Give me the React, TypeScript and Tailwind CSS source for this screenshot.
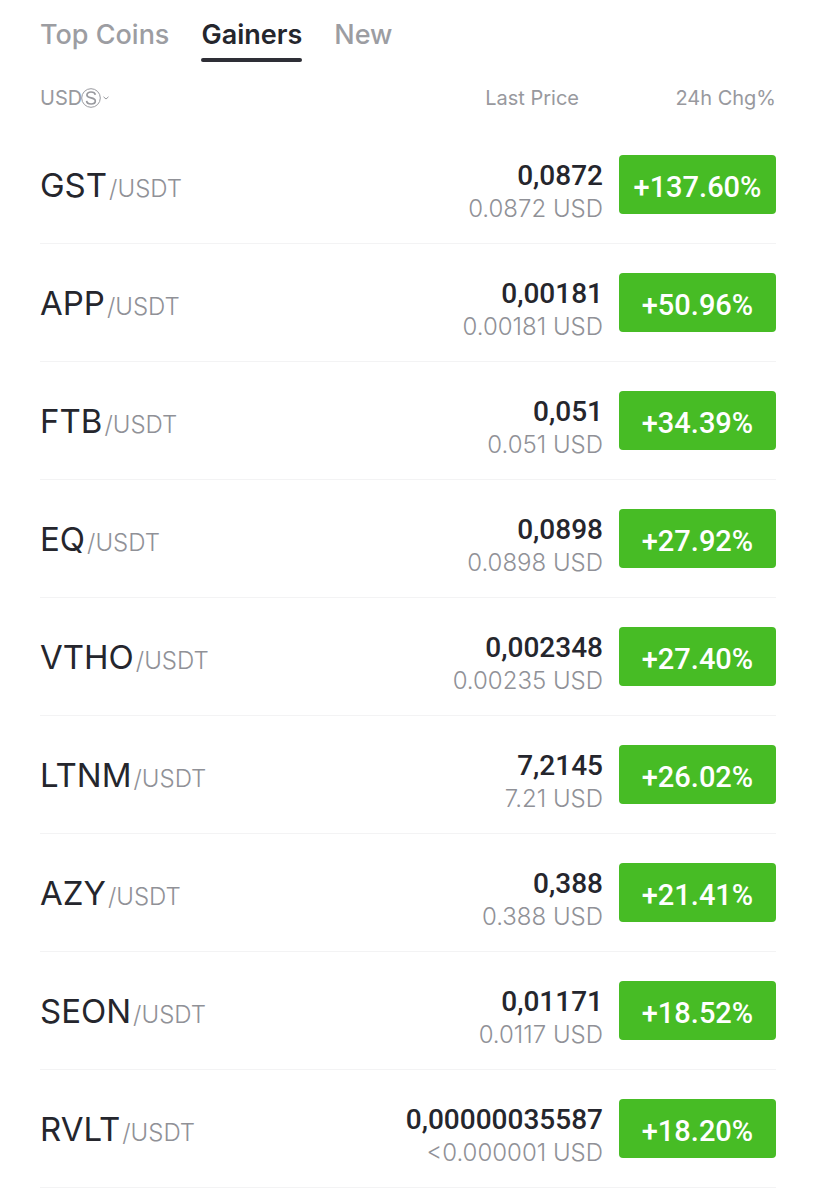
import clsx from 'clsx'

const tabs = ['Top Coins', 'Gainers', 'New']

const coins = [
  { symbol: 'GST', price: '0,0872', usd: '0.0872 USD', change: '+137.60%' },
  { symbol: 'APP', price: '0,00181', usd: '0.00181 USD', change: '+50.96%' },
  { symbol: 'FTB', price: '0,051', usd: '0.051 USD', change: '+34.39%' },
  { symbol: 'EQ', price: '0,0898', usd: '0.0898 USD', change: '+27.92%' },
  { symbol: 'VTHO', price: '0,002348', usd: '0.00235 USD', change: '+27.40%' },
  { symbol: 'LTNM', price: '7,2145', usd: '7.21 USD', change: '+26.02%' },
  { symbol: 'AZY', price: '0,388', usd: '0.388 USD', change: '+21.41%' },
  { symbol: 'SEON', price: '0,01171', usd: '0.0117 USD', change: '+18.52%' },
  { symbol: 'RVLT', price: '0,00000035587', usd: '<0.000001 USD', change: '+18.20%' },
]

function Tabs() {
  return (
    <nav className="flex gap-8 pt-[17px]">
      {tabs.map((tab) => {
        const active = tab === 'Gainers'
        return (
          <button
            type="button"
            key={tab}
            className={clsx(
              'flex flex-col items-center text-[27px] leading-9',
              active ? 'font-semibold text-[#25262d]' : 'font-medium text-[#9c9da2]'
            )}
          >
            {tab}
            {active && <span className="mt-[5px] h-1 w-full rounded-full bg-[#2e2f36]" />}
          </button>
        )
      })}
    </nav>
  )
}

function CurrencyButton() {
  return (
    <button type="button" className="flex items-center text-[20px] leading-6" aria-label="USDS">
      <span>USD</span>
      <svg className="-ml-px h-5 w-5" viewBox="0 0 20 20" fill="none" stroke="currentColor">
        <circle cx="10" cy="10" r="9.3" />
        <path
          d="M14.4 6.8C14 5.1 12.3 4 10 4C7.6 4 5.9 5.2 5.9 7C5.9 8.8 7.6 9.4 10 9.9C12.6 10.4 14.3 11.1 14.3 13C14.3 14.8 12.5 16 10.1 16C7.5 16 5.8 14.8 5.6 12.9"
          strokeWidth="1.7"
        />
      </svg>
      <svg className="ml-0.5 h-1 w-[6px]" viewBox="0 0 6 4" fill="none" stroke="currentColor">
        <path d="M0.5 0.8L3 3L5.5 0.8" />
      </svg>
    </button>
  )
}

export default function App() {
  return (
    <main className="bg-white px-10 font-['Inter','Liberation_Sans',sans-serif]">
      <Tabs />

      <table className="w-full border-separate border-spacing-0">
        <thead>
          <tr className="h-16 text-[20px] leading-6 text-[#98999e]">
            <th className="pt-[7px] text-left font-normal">
              <CurrencyButton />
            </th>
            <th className="pt-[7px] pr-6 text-right font-normal">Last Price</th>
            <th className="w-[173px] pt-[7px] text-right font-normal">24h Chg%</th>
          </tr>
        </thead>
        <tbody>
          {coins.map((coin) => (
            <tr className="h-[118px]" key={coin.symbol}>
              <td className="border-b border-[#f3f3f4] text-[33px] leading-10 whitespace-nowrap text-[#25262d]">
                {coin.symbol}
                <span className="ml-0.5 text-2xl font-light text-[#909197]">/USDT</span>
              </td>
              <td className="border-b border-[#f3f3f4] pt-4 text-right whitespace-nowrap">
                <div className="font-['Roboto',sans-serif] text-[28px] leading-8 font-medium text-[#25262d]">
                  {coin.price}
                </div>
                <div className="text-2xl leading-[34px] font-light text-[#909197]">{coin.usd}</div>
              </td>
              <td className="border-b border-[#f3f3f4] pl-4">
                <div className="flex h-[59px] items-center justify-center rounded-[4px] bg-[#47bc25] pt-1 font-['Roboto',sans-serif] text-[29px] leading-8 font-medium text-white">
                  {coin.change}
                </div>
              </td>
            </tr>
          ))}
        </tbody>
      </table>
    </main>
  )
}
